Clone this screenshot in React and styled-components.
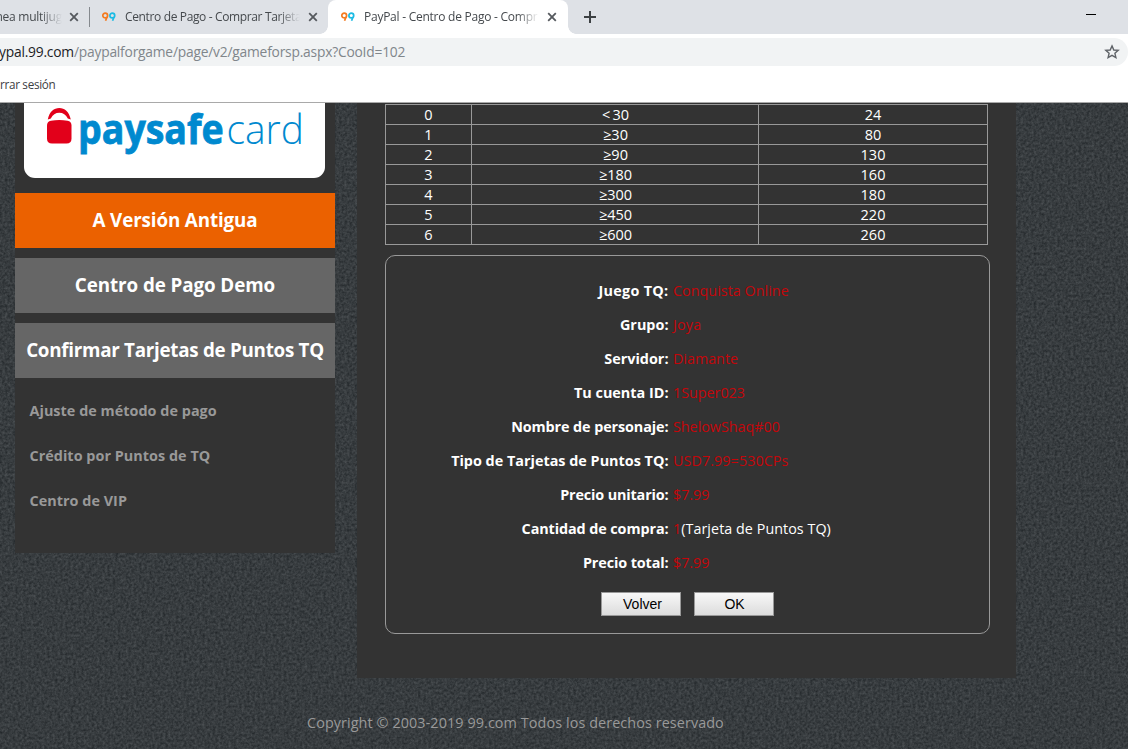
import React from 'react';
import styled, { createGlobalStyle } from 'styled-components';

const Global = createGlobalStyle`
  * { box-sizing: border-box; }
  body { margin: 0; font-family: "Open Sans", "Noto Sans", sans-serif; }
`;

const Screen = styled.div`
  width: 1128px;
  height: 749px;
  overflow: hidden;
  display: flex;
  flex-direction: column;
  background: #363c3f;
`;

/* Browser chrome */
const Chrome = styled.header`
  height: 103px;
  flex: none;
  background: #fff;
  border-bottom: 1px solid #a9a9a9;
`;
const TabStrip = styled.div`
  height: 34px;
  display: flex;
  align-items: center;
  background: #dee1e6;
`;
const Tab = styled.div`
  height: 34px;
  width: ${(p) => p.$width}px;
  flex: none;
  display: flex;
  align-items: center;
  position: relative;
  padding-left: ${(p) => p.$pad}px;
  border-radius: 8px 8px 0 0;
  background: ${(p) => (p.$active ? '#fff' : 'transparent')};
  ${(p) => p.$active && `
    &::before, &::after {
      content: '';
      position: absolute;
      bottom: 0;
      width: 8px;
      height: 8px;
    }
    &::before { left: -8px; background: radial-gradient(circle at 0 0, transparent 7.5px, #fff 8px); }
    &::after { right: -8px; background: radial-gradient(circle at 100% 0, transparent 7.5px, #fff 8px); }
  `}
`;
const TabTitle = styled.div`
  width: ${(p) => p.$width}px;
  margin-left: ${(p) => p.$gap || 0}px;
  display: flex;
  justify-content: ${(p) => (p.$end ? 'flex-end' : 'flex-start')};
  flex: none;
  overflow: hidden;
  white-space: nowrap;
  font-size: 12px;
  line-height: 20px;
  letter-spacing: ${(p) => p.$track || 0}px;
  color: #45494d;
  mask-image: linear-gradient(to right, #000 calc(100% - 22px), transparent);
`;
const Divider = styled.div`
  width: 1px;
  height: 20px;
  flex: none;
  background: #85898e;
`;
const CloseSvg = styled.svg`
  flex: none;
  margin-left: ${(p) => p.$gap}px;
`;
const NewTab = styled.svg`
  flex: none;
  margin-left: 16px;
`;
const Minimize = styled.div`
  width: 10px;
  height: 1px;
  margin: 0 32px 5px auto;
  background: #000;
`;
const AddressBar = styled.div`
  height: 28px;
  margin-top: 4px;
  padding-right: 8px;
  display: flex;
  align-items: center;
  justify-content: space-between;
  background: #f1f3f4;
  border-radius: 0 14px 14px 0;
`;
const Url = styled.div`
  font-size: 13.8px;
  line-height: 20px;
  margin-left: -1px;
  letter-spacing: -0.21px;
  white-space: nowrap;
  color: #80868b;
`;
const Host = styled.span`
  color: #202124;
`;
const Bookmarks = styled.div`
  padding-top: 8px;
  font-size: 11.7px;
  line-height: 20px;
  letter-spacing: -0.3px;
  color: #3c4043;
`;

/* Web page */
const Page = styled.main`
  flex: 1;
  position: relative;
  min-height: 0;
`;
const Texture = styled.svg`
  position: absolute;
  inset: 0;
`;
const Columns = styled.div`
  position: relative;
  display: flex;
  align-items: flex-start;
  gap: 22px;
  padding-left: 15px;
`;
const Sidebar = styled.aside`
  width: 320px;
  height: 450px;
  background: #333;
`;
const LogoCard = styled.div`
  width: 301px;
  height: 75px;
  margin: 0 0 15px 9px;
  background: #fff;
  border-radius: 0 0 11px 11px;
`;
const MenuButton = styled.div`
  height: 55px;
  margin-bottom: 10px;
  padding-bottom: 1px;
  display: flex;
  align-items: center;
  justify-content: center;
  background: ${(p) => (p.$accent ? '#eb6100' : '#666')};
  color: #fff;
  font-weight: 700;
  font-size: 18.8px;
  white-space: nowrap;
  letter-spacing: ${(p) => p.$track || 0}px;
`;
const Links = styled.nav`
  display: flex;
  flex-direction: column;
  padding: 0 0 0 14.5px;
`;
const SideLink = styled.a`
  height: 45px;
  line-height: 45px;
  font-size: 14.4px;
  font-weight: 700;
  color: #999;
  white-space: nowrap;
  letter-spacing: 0.03px;
`;
const Content = styled.section`
  width: 659px;
  height: 575px;
  padding-left: 28px;
  background: #333;
`;
const RankTable = styled.div`
  width: 603px;
  border: 1px solid #999;
  border-top: 0;
  margin-bottom: 10px;
`;
const RankRow = styled.div`
  display: grid;
  grid-template-columns: 85px 287px 229px;
  height: 20px;
  border-top: 1px solid #999;
  &:first-child { margin-top: 1px; }
`;
const RankCell = styled.div`
  line-height: 19px;
  font-size: 14.5px;
  word-spacing: -1.5px;
  text-align: center;
  color: #fff;
  & + & { border-left: 1px solid #999; }
  &:nth-child(2) { padding-left: 1px; }
`;
const Order = styled.div`
  width: 605px;
  height: 379px;
  border: 1px solid #999;
  border-radius: 10px;
  padding-top: 18px;
`;
const Field = styled.div`
  height: 34px;
  display: grid;
  grid-template-columns: 282.5px 1fr;
  column-gap: 4.5px;
  line-height: 34px;
  font-size: 14.4px;
  white-space: nowrap;
  color: #fff;
`;
const Label = styled.div`
  text-align: right;
  font-weight: 700;
  letter-spacing: ${(p) => p.$track || 0}px;
`;
const Value = styled.div`
  font-size: 14.3px;
  letter-spacing: ${(p) => p.$track || 0}px;
`;
const Red = styled.span`
  color: #c4060a;
`;
const Actions = styled.div`
  display: flex;
  gap: 13px;
  padding: 12px 0 0 215px;
`;
const Action = styled.button`
  width: 80px;
  height: 24px;
  padding: 0 0 0 ${(p) => p.$shift || 0}px;
  border: 1px solid #999;
  background: linear-gradient(#f8f8f8, #dcdcdc);
  font: 14px "Liberation Sans", Arial, sans-serif;
  color: #000;
`;
const Footer = styled.footer`
  position: relative;
  padding: 35px 0 0 307px;
  font-size: 14.4px;
  line-height: 20px;
  letter-spacing: 0.08px;
  color: #999;
`;

const Close = ({ gap }) => (
  <CloseSvg $gap={gap} width="10" height="10" viewBox="0 0 10 10">
    <path d="M1.2 1.2 8.8 8.8M8.8 1.2 1.2 8.8" stroke="#55595e" strokeWidth="1.8" />
  </CloseSvg>
);

const Favicon = () => (
  <svg width="14" height="10" viewBox="0 0 14 10" fill="none" strokeWidth="1.7">
    <circle cx="3.2" cy="3.5" r="2.4" stroke="#f47b20" />
    <path d="M4.800 5.400 3.600 8.800" stroke="#f47b20" />
    <circle cx="10.3" cy="3.500" r="2.4" stroke="#1cbbe4" />
    <path d="M11.800 5.400 10.600 8.800" stroke="#1cbbe4" />
  </svg>
);

const Star = () => (
  <svg width="16" height="16" viewBox="0 0 16 16">
    <path
      d="M8 1.9 9.8 6l4.4.4-3.3 2.9 1 4.3L8 11.3l-3.9 2.3 1-4.3L1.8 6.4 6.2 6Z"
      fill="none"
      stroke="#5f6368"
      strokeWidth="1.4"
    />
  </svg>
);

const PaysafeLogo = () => (
  <svg width="301" height="75" viewBox="0 0 301 75">
    <path d="M23.8 16.5C25.500 8.500 30 5 35.300 5S45 8.500 46.800 16.500L43.800 15.500C42 11.500 39 9.700 35.300 9.700S28.600 11.500 26.800 15.500Z" fill="#e2001a" />
    <path d="M23 22.500Q23 18.500 27 17.700Q35.300 16.200 43.500 17.700Q47.500 18.500 47.500 22.500V35.500Q47.500 40.500 42.500 40.500H28Q23 40.500 23 35.500Z" fill="#e2001a" />
    <text transform="translate(54 40.5) scale(0.915 1)" fontSize="41" fontWeight="700" fill="#0089cf" stroke="#0089cf" strokeWidth="0.8">paysafe</text>
    <text transform="translate(202.5 40.5) scale(0.95 1)" fontSize="41" fontWeight="300" fill="#0089cf">card</text>
  </svg>
);

const ranks = [
  ['0', '< 30', '24'],
  ['1', '≥30', '80'],
  ['2', '≥90', '130'],
  ['3', '≥180', '160'],
  ['4', '≥300', '180'],
  ['5', '≥450', '220'],
  ['6', '≥600', '260'],
];

const fields = [
  { label: 'Juego TQ:', value: 'Conquista Online', lt: 0.3, vt: 0.05 },
  { label: 'Grupo:', value: 'Joya', vt: 0.2 },
  { label: 'Servidor:', value: 'Diamante' },
  { label: 'Tu cuenta ID:', value: '1Super023' },
  { label: 'Nombre de personaje:', value: 'ShelowShaq#00', lt: -0.1 },
  { label: 'Tipo de Tarjetas de Puntos TQ:', value: 'USD7.99=530CPs', vt: 0.1 },
  { label: 'Precio unitario:', value: '$7.99', lt: -0.15 },
  { label: 'Cantidad de compra:', value: '1', note: '(Tarjeta de Puntos TQ)', lt: -0.1, vt: 0.06 },
  { label: 'Precio total:', value: '$7.99', lt: -0.12 },
];

export default function App() {
  return (
    <Screen>
      <Global />
      <Chrome>
        <TabStrip>
          <Tab $width={89} $pad={0}>
            <TabTitle $width={62} $end $track={-0.25}>nea multijug</TabTitle>
            <Close gap={7} />
          </Tab>
          <Divider />
          <Tab $width={238} $pad={12}>
            <Favicon />
            <TabTitle $width={175} $gap={9} $track={-0.36}>Centro de Pago - Comprar Tarjeta</TabTitle>
            <Close gap={8} />
          </Tab>
          <Tab $width={240} $pad={13} $active>
            <Favicon />
            <TabTitle $width={175} $gap={9} $track={-0.25}>PayPal - Centro de Pago - Compr</TabTitle>
            <Close gap={8} />
          </Tab>
          <NewTab width="12" height="12" viewBox="0 0 12 12">
            <path d="M6 0V12M0 6H12" stroke="#3c4043" strokeWidth="2" />
          </NewTab>
          <Minimize />
        </TabStrip>
        <AddressBar>
          <Url>
            <Host>ypal.99.com</Host>/paypalforgame/page/v2/gameforsp.aspx?CooId=102
          </Url>
          <Star />
        </AddressBar>
        <Bookmarks>rrar sesión</Bookmarks>
      </Chrome>
      <Page>
        <Texture width="1128" height="646">
          <filter id="grain" x="0" y="0" width="100%" height="100%" colorInterpolationFilters="sRGB">
            <feTurbulence type="fractalNoise" baseFrequency="0.38" numOctaves="3" seed="4" />
            <feColorMatrix values="0.2 0 0 0 0.117  0.2 0 0 0 0.135  0.2 0 0 0 0.147  0 0 0 0 1" />
          </filter>
          <rect width="1128" height="646" filter="url(#grain)" />
        </Texture>
        <Columns>
          <Sidebar>
            <LogoCard><PaysafeLogo /></LogoCard>
            <MenuButton $accent $track={-0.12}>A Versión Antigua</MenuButton>
            <MenuButton $track={-0.08}>Centro de Pago Demo</MenuButton>
            <MenuButton $track={-0.27}>Confirmar Tarjetas de Puntos TQ</MenuButton>
            <Links>
              <SideLink>Ajuste de método de pago</SideLink>
              <SideLink>Crédito por Puntos de TQ</SideLink>
              <SideLink>Centro de VIP</SideLink>
            </Links>
          </Sidebar>
          <Content>
            <RankTable>
              {ranks.map((row) => (
                <RankRow key={row[0]}>
                  {row.map((cell, i) => <RankCell key={i}>{cell}</RankCell>)}
                </RankRow>
              ))}
            </RankTable>
            <Order>
              {fields.map((f) => (
                <Field key={f.label}>
                  <Label $track={f.lt}>{f.label}</Label>
                  <Value $track={f.vt}><Red>{f.value}</Red>{f.note}</Value>
                </Field>
              ))}
              <Actions>
                <Action $shift={3}>Volver</Action>
                <Action $shift={1}>OK</Action>
              </Actions>
            </Order>
          </Content>
        </Columns>
        <Footer>Copyright © 2003-2019 99.com Todos los derechos reservado</Footer>
      </Page>
    </Screen>
  );
}
